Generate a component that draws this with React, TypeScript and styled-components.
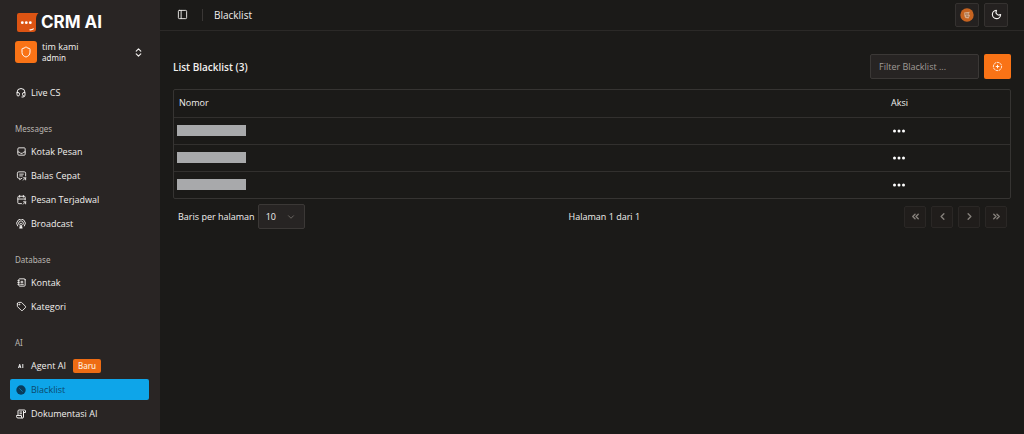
import React from "react";
import styled, { createGlobalStyle } from "styled-components";
import {
  Shield,
  ChevronsUpDown,
  PanelLeft,
  Moon,
  ChevronDown,
  ChevronLeft,
  ChevronRight,
  ChevronsLeft,
  ChevronsRight,
} from "lucide-react";
import {
  TbInbox,
  TbTag,
  TbMessageShare,
  TbCalendarShare,
  TbAddressBook,
  TbCircleDashedPlus,
} from "react-icons/tb";

const smallFont = `"Noto Sans", "Open Sans", sans-serif`;

const GlobalStyle = createGlobalStyle`
  * { box-sizing: border-box; }
  body {
    margin: 0;
    background: #1b1a18;
    color: #f2f0ee;
    font-family: "Open Sans", "Noto Sans", sans-serif;
    font-size: 9px;
    line-height: 12px;
  }
  button, input, select { font: inherit; color: inherit; }
  a { color: inherit; text-decoration: none; }
  svg { display: block; flex: none; }
`;

const Shell = styled.div`
  display: flex;
  min-height: 100vh;
`;

const Sidebar = styled.aside`
  flex: none;
  width: 160px;
  padding: 12px 11px 10px 10px;
  background: #292524;
`;

const Brand = styled.a`
  display: flex;
  align-items: center;
  gap: 2px;
  height: 20px;
  padding-left: 6px;
  font-family: Inter, sans-serif;
  font-size: 17px;
  font-weight: 700;
  line-height: 20px;
  color: #fff;
`;

const TeamButton = styled.button`
  display: flex;
  align-items: center;
  gap: 5px;
  width: 100%;
  height: 22px;
  margin: 9px 0 19px;
  padding: 0 5px;
  border: 0;
  background: none;
  text-align: left;
`;

const TeamMark = styled.span`
  display: grid;
  place-items: center;
  width: 22px;
  height: 22px;
  border-radius: 3px;
  background: #f97316;
  color: #fff;
`;

const TeamText = styled.span`
  flex: 1;
  line-height: 11px;
`;

const TeamName = styled.span`
  display: block;
`;

const TeamRole = styled.span`
  display: block;
  font-family: ${smallFont};
  font-size: 8px;
`;

const NavGroup = styled.nav`
  display: grid;
  gap: 3px;
  margin-bottom: 16px;
`;

const GroupTitle = styled.h2`
  height: 19px;
  margin: 0;
  padding: 4px 5px;
  font-family: ${smallFont};
  font-size: 8px;
  font-weight: 400;
  color: #b9b5b1;
`;

const NavLink = styled.a<{ $active?: boolean }>`
  display: flex;
  align-items: center;
  gap: 5px;
  height: 21px;
  padding: 0 5px 0 6px;
  border-radius: 2px;
  font-weight: ${(p) => (p.$active ? 400 : 500)};
  background: ${(p) => (p.$active ? "#0ea5e9" : "transparent")};
  color: ${(p) => (p.$active ? "#0c4a6e" : "#f2f0ee")};
`;

const Badge = styled.span`
  margin-left: 2px;
  padding: 1px 5px;
  border-radius: 2px;
  background: #ee6c14;
  color: #ffe9d6;
  font-family: ${smallFont};
  font-size: 8px;
`;

const Main = styled.main`
  flex: 1;
  min-width: 0;
`;

const TopBar = styled.header`
  display: flex;
  align-items: center;
  height: 31px;
  padding: 0 16px 1px 17px;
  border-bottom: 1px solid #2b2927;
`;

const PlainButton = styled.button`
  display: grid;
  place-items: center;
  padding: 0;
  border: 0;
  background: none;
`;

const Divider = styled.span`
  width: 1px;
  height: 12px;
  margin: 0 11px 0 14px;
  background: #3a3735;
`;

const PageName = styled.span`
  flex: 1;
  font-size: 10px;
`;

const TopActions = styled.div`
  display: flex;
  gap: 5px;
`;

const SquareButton = styled.button`
  display: grid;
  place-items: center;
  width: 24px;
  height: 24px;
  padding: 0;
  border: 1px solid #353230;
  border-radius: 2px;
  background: #242120;
`;

const Content = styled.section`
  padding: 23px 13px 0;
`;

const ContentHead = styled.div`
  display: flex;
  align-items: center;
  gap: 5px;
  margin-bottom: 10px;
`;

const Title = styled.h1`
  flex: 1;
  margin: 0;
  font-size: 10px;
  font-weight: 600;
`;

const Filter = styled.input`
  width: 109px;
  height: 25px;
  padding: 0 8px;
  border: 1px solid #3b3836;
  border-radius: 2px;
  background: #272423;
  &::placeholder { color: #a09b97; opacity: 1; }
`;

const AddButton = styled.button`
  display: grid;
  place-items: center;
  width: 27px;
  height: 25px;
  padding: 0;
  border: 0;
  border-radius: 2px;
  background: #f97316;
  color: #fff;
`;

const TableFrame = styled.div`
  border: 1px solid #363432;
  border-radius: 2px;
`;

const Table = styled.table`
  width: 100%;
  border-collapse: collapse;
  table-layout: fixed;
  th, td {
    height: 27px;
    padding: 0 5px;
    text-align: left;
    font-weight: 400;
  }
  td { padding: 0 3px; border-top: 1px solid #32302e; }
  th:last-child { width: 124px; }
`;

const Redacted = styled.span`
  display: block;
  width: 69px;
  height: 11px;
  background: #a8a9ab;
`;

const MoreButton = styled(PlainButton)`
  margin-left: 3px;
  color: #fff;
`;

const Footer = styled.footer`
  display: flex;
  align-items: center;
  justify-content: space-between;
  padding: 5px 4px 5px 5px;
`;

const PageSize = styled.label`
  display: flex;
  align-items: center;
  gap: 3px;
`;

const SelectWrap = styled.span`
  display: grid;
  grid-template-columns: 1fr;
  align-items: center;
  width: 47px;
  > * { grid-area: 1 / 1; }
  > svg { justify-self: end; margin-right: 9px; color: #77726e; pointer-events: none; }
`;

const Select = styled.select`
  appearance: none;
  width: 100%;
  height: 25px;
  padding: 0 7px;
  border: 1px solid #3b3836;
  border-radius: 2px;
  background: #272423;
`;

const Pager = styled.div`
  display: flex;
  gap: 5px;
`;

const PageButton = styled.button`
  display: grid;
  place-items: center;
  width: 22px;
  height: 22px;
  padding: 0;
  border: 1px solid #2a2725;
  border-radius: 2px;
  background: #201d1b;
  color: #85807b;
`;

function BrandMark() {
  return (
    <svg width="23" height="20" viewBox="0 0 23 20" aria-hidden="true">
      <path d="M3 1H22.5C20.3 3 20 5 20 8V17Q20 20 17 20H3Q1 20 1 18V3Q1 1 3 1Z" fill="#dc5413" />
      <circle cx="6.3" cy="10.7" r="1.4" fill="#fff" />
      <circle cx="10.3" cy="10.7" r="1.4" fill="#fff" />
      <circle cx="14.3" cy="10.7" r="1.4" fill="#fff" />
      <path d="M13.5 17.8Q16 18.2 17.7 16.6" stroke="#fff" strokeWidth="1.1" fill="none" />
    </svg>
  );
}

function HeadsetMark() {
  return (
    <svg width="10" height="10" viewBox="0 0 20 20" fill="none" stroke="currentColor" strokeWidth="2" strokeLinejoin="round" aria-hidden="true">
      <path d="M2 10V9A8 8 0 0 1 18 9V14Q18 18 14 18H11" />
      <path d="M2 9H4Q7 9 7 12V13Q7 16 4 16Q2 16 2 13ZM18 9H16Q13 9 13 12V13Q13 16 16 16" />
    </svg>
  );
}

function PodcastMark() {
  return (
    <svg width="10" height="10" viewBox="0 0 20 20" fill="none" stroke="currentColor" strokeWidth="1.9" strokeLinecap="round" aria-hidden="true">
      <path d="M3.2 14A8.6 8.6 0 1 1 16.8 14" />
      <path d="M6.2 11.5A4.8 4.8 0 1 1 13.8 11.5" />
      <circle cx="10" cy="9" r="1.6" fill="currentColor" stroke="none" />
      <path d="M9 12H11L12.6 18.5H7.4Z" fill="currentColor" strokeWidth="1" />
    </svg>
  );
}

function ScriptMark() {
  return (
    <svg width="10" height="10" viewBox="0 0 20 20" fill="none" stroke="currentColor" strokeWidth="2" strokeLinejoin="round" aria-hidden="true">
      <path d="M4 13V4Q4 2 6 2H17Q19 2 19 4V7H15M15 4V16Q15 18 13 18H4Q1 18 1 15V13H11V16Q11 18 13 18" />
      <path d="M7 6H12M7 9.5H12" />
    </svg>
  );
}

function AiMark() {
  return (
    <svg width="10" height="10" viewBox="0 0 10 10" fill="none" stroke="#eee" aria-hidden="true">
      <path d="M2.5 7L3.7 3.3L4.9 7M3 5.8H4.5M6.8 3V7" strokeWidth="1" />
    </svg>
  );
}

function BlockedMark() {
  return (
    <svg width="10" height="10" viewBox="0 0 10 10" aria-hidden="true">
      <circle cx="5" cy="5" r="4.7" fill="#083b5b" />
      <path d="M3.4 3.4L6.6 6.6" stroke="#1384bb" strokeWidth="0.8" />
    </svg>
  );
}

function Avatar() {
  return (
    <svg width="14" height="14" viewBox="0 0 14 14" aria-hidden="true">
      <circle cx="7" cy="7" r="6.7" fill="#c66320" />
      <path d="M4.2 4.5L9.8 3.8L8.8 6.2L10 7.2L8.6 10.5L5.5 10L4.4 8Z" fill="#d8ad8c" />
      <path d="M5 6H8.4M6 8L8.4 8.3" stroke="#85502d" strokeWidth="0.8" />
    </svg>
  );
}

function Dots() {
  return (
    <svg width="14" height="12" viewBox="0 0 14 12" fill="currentColor" aria-hidden="true">
      <circle cx="2.5" cy="6" r="1.5" />
      <circle cx="7" cy="6" r="1.5" />
      <circle cx="11.5" cy="6" r="1.5" />
    </svg>
  );
}

type Item = { label: string; icon: React.ReactNode; active?: boolean; badge?: string };

const groups: { title?: string; items: Item[] }[] = [
  { items: [{ label: "Live CS", icon: <HeadsetMark /> }] },
  {
    title: "Messages",
    items: [
      { label: "Kotak Pesan", icon: <TbInbox size={11} /> },
      { label: "Balas Cepat", icon: <TbMessageShare size={11} /> },
      { label: "Pesan Terjadwal", icon: <TbCalendarShare size={11} /> },
      { label: "Broadcast", icon: <PodcastMark /> },
    ],
  },
  {
    title: "Database",
    items: [
      { label: "Kontak", icon: <TbAddressBook size={11} /> },
      { label: "Kategori", icon: <TbTag size={11} /> },
    ],
  },
  {
    title: "AI",
    items: [
      { label: "Agent AI", icon: <AiMark />, badge: "Baru" },
      { label: "Blacklist", icon: <BlockedMark />, active: true },
      { label: "Dokumentasi AI", icon: <ScriptMark /> },
    ],
  },
];

const IconSlot = styled.span`
  display: grid;
  place-items: center;
  flex: none;
  width: 10px;
`;

export default function App() {
  return (
    <>
      <GlobalStyle />
      <Shell>
        <Sidebar>
          <Brand href="#">
            <BrandMark />
            CRM AI
          </Brand>
          <TeamButton type="button">
            <TeamMark>
              <Shield size={12} />
            </TeamMark>
            <TeamText>
              <TeamName>tim kami</TeamName>
              <TeamRole>admin</TeamRole>
            </TeamText>
            <ChevronsUpDown size={11} strokeWidth={2.5} />
          </TeamButton>
          {groups.map((group, i) => (
            <NavGroup key={i} aria-label={group.title ?? "Live"}>
              {group.title && <GroupTitle>{group.title}</GroupTitle>}
              {group.items.map((item) => (
                <NavLink
                  key={item.label}
                  href="#"
                  $active={item.active}
                  aria-current={item.active ? "page" : undefined}
                >
                  <IconSlot>{item.icon}</IconSlot>
                  {item.label}
                  {item.badge && <Badge>{item.badge}</Badge>}
                </NavLink>
              ))}
            </NavGroup>
          ))}
        </Sidebar>
        <Main>
          <TopBar>
            <PlainButton type="button" aria-label="Sidebar">
              <PanelLeft size={11} />
            </PlainButton>
            <Divider />
            <PageName>Blacklist</PageName>
            <TopActions>
              <SquareButton type="button" aria-label="Profil">
                <Avatar />
              </SquareButton>
              <SquareButton type="button" aria-label="Tema">
                <Moon size={11} strokeWidth={2.5} />
              </SquareButton>
            </TopActions>
          </TopBar>
          <Content>
            <ContentHead>
              <Title>List Blacklist (3)</Title>
              <Filter placeholder="Filter Blacklist ..." aria-label="Filter Blacklist" />
              <AddButton type="button" aria-label="Tambah">
                <TbCircleDashedPlus size={11} />
              </AddButton>
            </ContentHead>
            <TableFrame>
              <Table>
                <thead>
                  <tr>
                    <th>Nomor</th>
                    <th>Aksi</th>
                  </tr>
                </thead>
                <tbody>
                  {[1, 2, 3].map((row) => (
                    <tr key={row}>
                      <td>
                        <Redacted />
                      </td>
                      <td>
                        <MoreButton type="button" aria-label="Aksi">
                          <Dots />
                        </MoreButton>
                      </td>
                    </tr>
                  ))}
                </tbody>
              </Table>
            </TableFrame>
            <Footer>
              <PageSize>
                Baris per halaman
                <SelectWrap>
                  <Select defaultValue="10">
                    <option>10</option>
                    <option>20</option>
                    <option>50</option>
                  </Select>
                  <ChevronDown size={10} />
                </SelectWrap>
              </PageSize>
              <span>Halaman 1 dari 1</span>
              <Pager>
                <PageButton type="button" aria-label="Halaman pertama">
                  <ChevronsLeft size={11} strokeWidth={3} />
                </PageButton>
                <PageButton type="button" aria-label="Sebelumnya">
                  <ChevronLeft size={11} strokeWidth={3} />
                </PageButton>
                <PageButton type="button" aria-label="Berikutnya">
                  <ChevronRight size={11} strokeWidth={3} />
                </PageButton>
                <PageButton type="button" aria-label="Halaman terakhir">
                  <ChevronsRight size={11} strokeWidth={3} />
                </PageButton>
              </Pager>
            </Footer>
          </Content>
        </Main>
      </Shell>
    </>
  );
}
